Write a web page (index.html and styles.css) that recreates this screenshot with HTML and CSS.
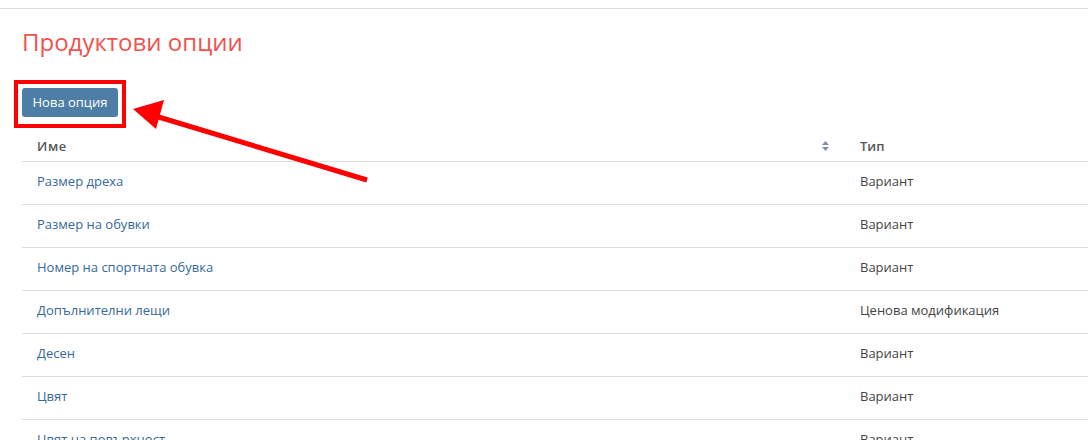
FILE: index.html
```html
<!DOCTYPE html>
<html lang="bg">
<head>
    <meta charset="UTF-8">
    <meta name="viewport" content="width=device-width, initial-scale=1.0">
    <title>Продуктови опции</title>
    <link rel="stylesheet" href="styles.css">
</head>
<body>
    <div id="page">
        <h1 class="title">Продуктови опции</h1>
        <div class="toolbar">
            <span class="mark"><a class="btn" href="#">Нова опция</a></span>
        </div>
        <table class="list">
            <thead>
                <tr>
                    <th class="col_name">Име
                        <svg class="sort" width="7" height="10" viewBox="0 0 7 10"><path d="M3.5 0 L7 4 L0 4 Z M0 6 L7 6 L3.5 10 Z" fill="#7d8ea8"/></svg>
                    </th>
                    <th>Тип</th>
                </tr>
            </thead>
            <tbody>
                <tr><td><a href="#">Размер дреха</a></td><td>Вариант</td></tr>
                <tr><td><a href="#">Размер на обувки</a></td><td>Вариант</td></tr>
                <tr><td><a href="#">Номер на спортната обувка</a></td><td>Вариант</td></tr>
                <tr><td><a href="#">Допълнителни лещи</a></td><td>Ценова модификация</td></tr>
                <tr><td><a href="#">Десен</a></td><td>Вариант</td></tr>
                <tr><td><a href="#">Цвят</a></td><td>Вариант</td></tr>
                <tr><td><a href="#">Цвят на повърхност</a></td><td>Вариант</td></tr>
            </tbody>
        </table>
    </div>
    <!-- стрелка към бутона -->
    <svg class="arrow" width="1088" height="440" viewBox="0 0 1088 440">
        <line x1="367" y1="180" x2="152" y2="115" stroke="#f00" stroke-width="5"/>
        <polygon points="133,109 164,100 156,129" fill="#f00"/>
    </svg>
</body>
</html>
```

FILE: styles.css
```css
* {margin: 0; padding: 0; box-sizing: border-box;}
html, body {overflow: hidden;}
body {font-family: "Open Sans", "Liberation Sans", sans-serif; font-size: 13px; color: #444; background: #fff;}
a {text-decoration: none;}

#page {margin-top: 8px; border-top: 1px solid #ddd; padding: 0 0 0 22px; width: 1120px;}

.title {font-size: 24px; font-weight: 400; color: #ee5350; line-height: 32px; padding-top: 17px;}

.toolbar {margin-top: 22px; margin-left: -8px; height: 52px;}
.toolbar .mark {display: inline-block; border: 4px solid #f00; padding: 4px 4px 7px 4px;}
.toolbar .btn {display: block; width: 96px; height: 29px; line-height: 29px; text-align: center;
               background-color: #4e7ea5; color: #fff; border-radius: 3px; font-size: 13px;}

.list {width: 100%; border-collapse: collapse;}
.list th {text-align: left; font-weight: 600; color: #555; height: 29px; padding: 0 15px;
          border-bottom: 1px solid #ddd; letter-spacing: 0.6px;}
.list th.col_name {width: 823px; position: relative;}
.list th .sort {position: absolute; right: 16px; top: 9px;}
.list th + th {letter-spacing: 0;}
.list td {height: 43px; padding: 0 15px 3px; border-bottom: 1px solid #ddd;}
.list td a {color: #35699a;}

.arrow {position: absolute; left: 0; top: 0; pointer-events: none;}
```
